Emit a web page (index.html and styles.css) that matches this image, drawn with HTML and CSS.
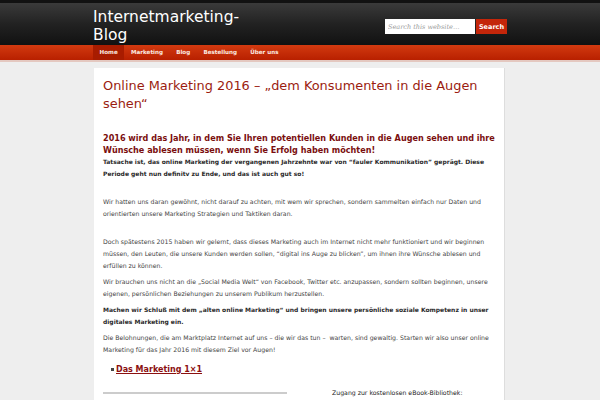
FILE: index.html
```html
<!DOCTYPE html>
<html lang="de">
<head>
<meta charset="utf-8">
<title>Internetmarketing-Blog</title>
<link rel="stylesheet" href="styles.css">
</head>
<body>
<header class="header">
  <div class="wrap header-inner">
    <div class="site-title">Internetmarketing-<br>Blog</div>
    <form class="search">
      <input class="search-input" type="text" placeholder="Search this website…">
      <button class="search-btn" type="button">Search</button>
    </form>
  </div>
</header>
<nav class="nav">
  <ul class="wrap nav-list">
    <li class="nav-item active">Home</li>
    <li class="nav-item">Marketing</li>
    <li class="nav-item">Blog</li>
    <li class="nav-item">Bestellung</li>
    <li class="nav-item">Über uns</li>
  </ul>
</nav>
<main class="wrap main">
  <article class="post">
    <h1 class="post-title">Online Marketing 2016 – „dem Konsumenten in die Augen sehen“</h1>
    <h2 class="post-sub">2016 wird das Jahr, in dem Sie Ihren potentiellen Kunden in die Augen sehen und ihre Wünsche ablesen müssen, wenn Sie Erfolg haben möchten!</h2>
    <p class="lead gap">Tatsache ist, das online Marketing der vergangenen Jahrzehnte war von “fauler Kommunikation” geprägt. Diese Periode geht nun definitv zu Ende, und das ist auch gut so!</p>
    <p class="gap">Wir hatten uns daran gewöhnt, nicht darauf zu achten, mit wem wir sprechen, sondern sammelten einfach nur Daten und orientierten unsere Marketing Strategien und Taktiken daran.</p>
    <p>Doch spätestens 2015 haben wir gelernt, dass dieses Marketing auch im Internet nicht mehr funktioniert und wir beginnen müssen, den Leuten, die unsere Kunden werden sollen, “digital ins Auge zu blicken”, um ihnen ihre Wünsche ablesen und erfüllen zu können.</p>
    <p>Wir brauchen uns nicht an die „Social Media Welt“ von Facebook, Twitter etc. anzupassen, sondern sollten beginnen, unsere eigenen, persönlichen Beziehungen zu unserem Publikum herzustellen.</p>
    <p class="strong">Machen wir Schluß mit dem „alten online Marketing“ und bringen unsere persönliche soziale Kompetenz in unser digitales Marketing ein.</p>
    <p>Die Belohnungen, die am Marktplatz Internet auf uns – die wir das tun –&nbsp; warten, sind gewaltig. Starten wir also unser online Marketing für das Jahr 2016 mit diesem Ziel vor Augen!</p>
    <ul class="links">
      <li class="link-item"><a class="link" href="#">Das Marketing 1×1</a></li>
    </ul>
    <div class="bottom">
      <div class="rule"></div>
      <div class="ebook">Zugang zur kostenlosen eBook-Bibliothek:</div>
    </div>
  </article>
</main>
</body>
</html>
```
FILE: styles.css
```css
html, body { margin: 0; padding: 0; }
body {
  background: #eeeeee;
  font-family: "DejaVu Sans", Verdana, sans-serif;
  color: #444;
}
.wrap { width: 414px; margin: 0 auto; }
.header {
  height: 45px;
  background: linear-gradient(#3a3a3a 0%, #222 50%, #111 100%);
  border-top: 3px solid #111;
  box-sizing: border-box;
}
.header-inner { display: flex; justify-content: space-between; }
.site-title {
  color: #fff;
  font-size: 15.5px;
  line-height: 18px;
  padding-top: 5px;
}
.search { display: flex; margin-top: 16px; height: 15px; }
.search-input {
  width: 90px; height: 15px; box-sizing: border-box;
  border: 0; padding: 0 3px; margin: 0;
  font-family: "DejaVu Serif", serif; font-style: italic; font-size: 6.5px;
  background: #fff; color: #888;
}
.search-input::placeholder { color: #999; }
.search-btn {
  width: 31px; height: 15px; border: 0; margin: 0 0 0 1px; padding: 0;
  background: #c4260a; color: #fff; font-family: "DejaVu Sans", sans-serif;
  font-weight: bold; font-size: 6.5px;
}
.nav {
  height: 15px;
  background: linear-gradient(#d23a10, #b82000);
  border-bottom: 2px solid #e4c8c0;
}
.nav-list { list-style: none; padding: 0; margin: 0 auto; display: flex; height: 15px; }
.nav-item {
  color: #fbe9e0; font-size: 5.6px; font-weight: bold; line-height: 15px;
  padding: 0 6.6px;
}
.nav-item.active { background: #a81c00; }
.main { padding-top: 6px; }
.post {
  margin-left: 1px; width: 411px; box-sizing: border-box;
  background: #fff; padding: 9px 9px 0;
  height: 340px; overflow: hidden;
  border-right: 1px solid #ddd;
}
.post-title {
  margin: 0; font-weight: normal; font-size: 12.9px; line-height: 18px;
  color: #9b1c10;
}
.post-sub {
  margin: 19px 0 0; font-size: 8.1px; line-height: 12px; font-weight: bold; color: #7a0e0e;
}
p { margin: 0 0 4px; font-size: 6.2px; line-height: 12px; }
p.gap { margin-bottom: 16px; }
.lead, .strong { font-weight: bold; color: #2a2a2a; font-size: 6px; }
.links { margin: 8px 0 0; padding-left: 8px; font-size: 8px; line-height: 12px; list-style: none; }
.link-item::before {
  content: ""; display: inline-block; width: 3px; height: 3px;
  background: #444; margin-right: 2px; vertical-align: middle;
}
.link { color: #8b1010; font-weight: bold; }
.bottom { display: flex; align-items: flex-start; margin-top: 11px; }
.rule { width: 184px; height: 2px; background: #ccc; margin-top: 5px; }
.ebook { font-size: 6.2px; line-height: 12px; margin-left: 45px; color: #222; }
```
